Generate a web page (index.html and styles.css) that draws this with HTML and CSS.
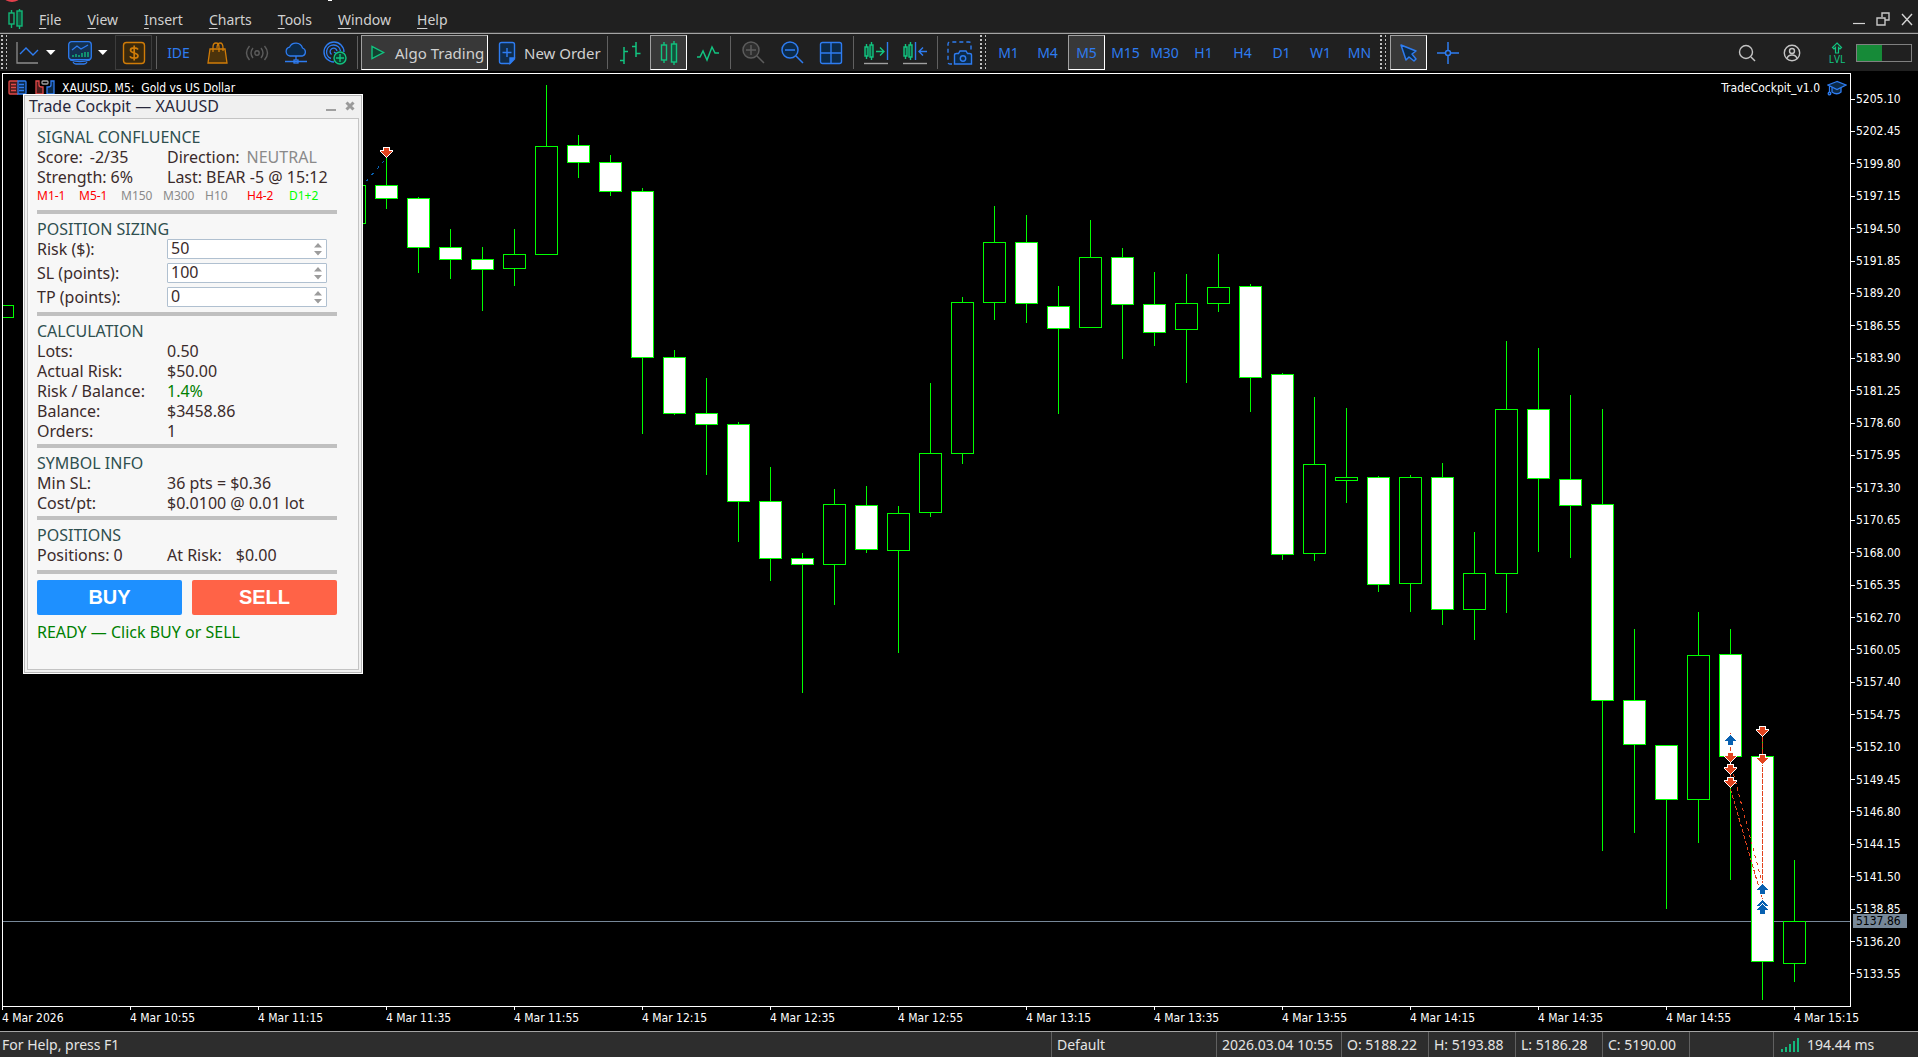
FILE: index.html
```html
<!DOCTYPE html>
<html lang="en">
<head>
    <meta charset="UTF-8">
    <meta name="viewport" content="width=device-width, initial-scale=1.0">
    <title>XAUUSD, M5</title>
    <link rel="stylesheet" href="styles.css">
</head>
<body>
    <header class="menubar">
        <svg class="title-edge" width="340" height="3" viewBox="0 0 340 3"><ellipse cx="12" cy="-3" rx="8" ry="5" fill="#e5404c"/><path d="M328 0h4v1h-4z" fill="#fff"/></svg>
        <svg class="logo" width="16" height="20" viewBox="0 0 16 20" fill="none" stroke="#12b878" stroke-width="1.4"><path d="M3.500 1v3M3.500 15v4M11.500 0v2M11.500 17v3"/><rect x="1" y="4" width="5" height="11"/><rect x="9" y="2" width="5" height="15" fill="#12533b"/></svg>
        <nav class="menu">
            <a href="#"><u>F</u>ile</a>
            <a href="#"><u>V</u>iew</a>
            <a href="#"><u>I</u>nsert</a>
            <a href="#"><u>C</u>harts</a>
            <a href="#"><u>T</u>ools</a>
            <a href="#"><u>W</u>indow</a>
            <a href="#"><u>H</u>elp</a>
        </nav>
        <div class="window-controls">
            <button aria-label="Minimize"><svg width="14" height="14" viewBox="0 0 14 14"><path d="M1 11.500h12" stroke="#d4d4d4" stroke-width="1.200"/></svg></button>
            <button aria-label="Restore"><svg width="14" height="14" viewBox="0 0 14 14" fill="none" stroke="#c8c8c8" stroke-width="1.400"><path d="M6 5V1h7v7H9"/><path d="M1 6h8v7H1z"/></svg></button>
            <button aria-label="Close"><svg width="14" height="14" viewBox="0 0 14 14"><path d="M2 2l10 11M12 2L2 13" stroke="#d4d4d4" stroke-width="1.400"/></svg></button>
        </div>
    </header>

    <div class="toolbar">
        <span class="grip"></span>
        <button class="tool drop" aria-label="Chart">
            <svg width="24" height="24" viewBox="0 0 24 24" fill="none"><path d="M1 1v21h21" stroke="#8c8c8c" stroke-width="1.300"/><path d="M4 13l6-6 7 7 5-5" stroke="#2e7cf0" stroke-width="1.400"/></svg>
            <svg width="10" height="6" viewBox="0 0 10 6"><path d="M0 0h9.500L4.800 5z" fill="#fff"/></svg>
        </button>
        <button class="tool drop" aria-label="Indicators">
            <svg width="24" height="24" viewBox="0 0 24 24" fill="none" stroke="#2e7cf0" stroke-width="1.300"><rect x=".7" y=".7" width="22.600" height="18" rx="3" fill="#14304e"/><path d="M4 9l5-4 4 3 7-4M2 19q10 3 20 0M5 21q1 2 3 2h8q2 0 3-2"/><path d="M5 16v-2M8 16v-3M11 16v-2M14 16v-4M17 16v-5M20 16v-5" stroke="#12c480"/></svg>
            <svg width="10" height="6" viewBox="0 0 10 6"><path d="M0 0h9.500L4.800 5z" fill="#fff"/></svg>
        </button>
        <button class="tool framed" aria-label="Quotes">
            <svg width="24" height="24" viewBox="0 0 24 24" fill="none" stroke="#d07c08" stroke-width="1.400"><rect x="1.500" y="1.500" width="21" height="21" rx="3" fill="#3a290c"/><path d="M16 8.500C15 6.600 8.500 6 8.500 9.300c0 3.400 7.500 1.900 7.500 5.400 0 3.300-7 3.100-8 .5M12.200 4.500v15" stroke-width="1.700"/></svg>
        </button>
        <span class="divider"></span>
        <button class="tool">IDE</button>
        <button class="tool" aria-label="Market">
            <svg width="24" height="24" viewBox="0 0 24 24" fill="#4c330b" stroke="#d07c08" stroke-width="1.300"><path d="M4 8h15l2 14H2z"/><path d="M7 11V6q0-4 3-4 3 0 3 4v5M11 7q0-5 3-5t3 5v3" fill="none"/></svg>
        </button>
        <button class="tool" aria-label="Signals">
            <svg width="24" height="24" viewBox="0 0 24 24" fill="none" stroke="#5c5c5c" stroke-width="1.400"><circle cx="12" cy="12" r="2.200"/><path d="M8 7q-4 5 0 10M16 7q4 5 0 10M4.500 5q-6 7 0 14M19.500 5q6 7 0 14"/></svg>
        </button>
        <button class="tool" aria-label="VPS">
            <svg width="24" height="24" viewBox="0 0 24 24" fill="none" stroke="#2e7cf0" stroke-width="1.300"><path d="M6 15a4.500 4.500 0 0 1-.5-8.800A7 7 0 0 1 18.500 7a4.200 4.200 0 0 1 0 8z" fill="#0c2a48"/><path d="M12 15v4M1 20.500h22"/><rect x="10" y="19" width="4" height="3"/></svg>
        </button>
        <button class="tool" aria-label="Copy trading">
            <svg width="24" height="24" viewBox="0 0 24 24" fill="none" stroke="#2e7cf0" stroke-width="1.400"><path d="M11 21A10 10 0 1 1 21 11M8 17.500A7 7 0 1 1 17.500 10M8.500 13.500A3.500 3.500 0 1 1 14 10M11 11l3 2"/><circle cx="17" cy="17" r="6" fill="#0d4030" stroke="#12c480"/><path d="M13 17h8M17 13v8" stroke="#12c480"/></svg>
        </button>
        <span class="divider"></span>
        <button class="tool wide algo active">
            <svg width="18" height="18" viewBox="0 0 18 18"><path d="M3 2.500v12L14.500 8.500z" fill="#12402f" stroke="#12c480" stroke-width="1.400"/></svg>
            Algo Trading
        </button>
        <button class="tool wide">
            <svg width="18" height="24" viewBox="0 0 18 24" fill="none" stroke="#2e7cf0" stroke-width="1.400"><path d="M3.500 1.500h11q2 0 2 2V18l-4.500 4.500H3.500q-2 0-2-2v-17q0-2 2-2z" fill="#102c4a"/><path d="M16 17h-4v5z" fill="#2e7cf0"/><path d="M9 7v9M4.500 11.500h9"/></svg>
            New Order
        </button>
        <span class="divider"></span>
        <button class="tool" aria-label="Bar chart">
            <svg width="24" height="24" viewBox="0 0 24 24" fill="none" stroke="#12c480" stroke-width="1.500"><path d="M6 6v17M2 19.500h4M6 10.500h4M18 1v15M14 5.500h4M18 12.500h4.500"/></svg>
        </button>
        <button class="tool active" aria-label="Candlesticks">
            <svg width="24" height="24" viewBox="0 0 24 24" fill="none" stroke="#12c480" stroke-width="1.400"><path d="M7 1v3M7 19v3M17 0v3M17 21v3"/><rect x="4.500" y="4" width="5" height="15"/><rect x="14.500" y="3" width="5" height="18" fill="#12533b"/></svg>
        </button>
        <button class="tool" aria-label="Line chart">
            <svg width="24" height="24" viewBox="0 0 24 24" fill="none" stroke="#12c480" stroke-width="1.500"><path d="M1 16h3l3-6 4 9 5-13 3 6h4"/></svg>
        </button>
        <span class="divider"></span>
        <button class="tool" aria-label="Zoom in">
            <svg width="24" height="24" viewBox="0 0 24 24" fill="none" stroke="#5c5c5c" stroke-width="1.500"><circle cx="10" cy="9" r="8" fill="#2e2e2e"/><path d="M5 9h10M10 4v10M16 15l7 7"/></svg>
        </button>
        <button class="tool" aria-label="Zoom out">
            <svg width="24" height="24" viewBox="0 0 24 24" fill="none" stroke="#2e7cf0" stroke-width="1.500"><circle cx="10" cy="9" r="8" fill="#0c2a48"/><path d="M5 9h10M16 15l7 7"/></svg>
        </button>
        <button class="tool" aria-label="Tile windows">
            <svg width="24" height="24" viewBox="0 0 24 24" fill="none" stroke="#2e7cf0" stroke-width="1.400"><rect x="1.500" y="1.500" width="21" height="21" rx="2" fill="#0c2a48"/><path d="M12 1.500v21M1.500 12h21"/></svg>
        </button>
        <span class="divider"></span>
        <button class="tool" aria-label="Auto scroll">
            <svg width="26" height="24" viewBox="0 0 26 24" fill="none" stroke="#12c480" stroke-width="1.400"><path d="M3.500 3v15M8.500 1v18"/><path d="M2 6h3v9H2zM7 4h3v12H7z" fill="#12533b"/><path d="M13 10.500h8M17 6.500l4 4-4 4"/><path d="M24.500 1v18" stroke="#2e7cf0"/><path d="M1 22.500h24" stroke="#a0a0a0"/></svg>
        </button>
        <button class="tool" aria-label="Chart shift">
            <svg width="26" height="24" viewBox="0 0 26 24" fill="none" stroke="#12c480" stroke-width="1.400"><path d="M3.500 3v15M8.500 1v18"/><path d="M2 6h3v9H2zM7 4h3v12H7z" fill="#12533b"/><path d="M13.500 1v18M25 10.500h-8M21 6.500l-4 4 4 4" stroke="#2e7cf0"/><path d="M1 22.500h24" stroke="#a0a0a0"/></svg>
        </button>
        <span class="divider"></span>
        <button class="tool" aria-label="Screenshot">
            <svg width="26" height="24" viewBox="0 0 26 24" fill="none" stroke="#2e7cf0" stroke-width="1.400"><path d="M5 23H3q-2 0-2-2V3q0-2 2-2h19q2 0 2 2v6" stroke-dasharray="4 3"/><path d="M7.500 14q0-1.500 2-1.500h2l1.500-2.500h6l1.500 2.500h2q2 0 2 1.500v9h-17z" fill="#0c2a48"/><circle cx="16" cy="17.500" r="2.700"/></svg>
        </button>
        <span class="grip"></span>
        <button class="tool">M1</button>
        <button class="tool">M4</button>
        <button class="tool active">M5</button>
        <button class="tool">M15</button>
        <button class="tool">M30</button>
        <button class="tool">H1</button>
        <button class="tool">H4</button>
        <button class="tool">D1</button>
        <button class="tool">W1</button>
        <button class="tool">MN</button>
        <span class="grip"></span>
        <button class="tool active" aria-label="Cursor">
            <svg width="24" height="24" viewBox="0 0 24 24"><path d="M4 4l5 15 3-3 5 4 2-2-4-5 4-3z" fill="#0c2a48" stroke="#2e7cf0" stroke-width="1.500" stroke-linejoin="round"/></svg>
        </button>
        <button class="tool" aria-label="Crosshair">
            <svg width="24" height="24" viewBox="0 0 24 24" fill="none" stroke="#2e7cf0" stroke-width="1.500"><circle cx="12" cy="12" r="2.500"/><path d="M12 1v8M12 15v8M1 12h8M15 12h8"/></svg>
        </button>
        <div class="toolbar-right">
            <div class="account">
                <button class="mini" aria-label="Search"><svg width="20" height="20" viewBox="0 0 20 20" fill="none" stroke="#c4c4c4" stroke-width="1.400"><circle cx="9" cy="9" r="6.500"/><path d="M14 14l4 4"/></svg></button>
                <button class="mini" aria-label="Account"><svg width="20" height="20" viewBox="0 0 20 20" fill="none" stroke="#c4c4c4" stroke-width="1.400"><circle cx="10" cy="10" r="7.700"/><circle cx="10" cy="8" r="2.500"/><path d="M5 15.500q1-3.500 5-3.500t5 3.500"/></svg></button>
                <button class="mini level"><svg width="12" height="12" viewBox="0 0 12 12"><path d="M6 1l4.500 4.500L9 7 7.500 5.500V11h-3V5.500L3 7 1.500 5.500z" fill="none" stroke="#12c480" stroke-width="1.200"/></svg>LVL</button>
            </div>
            <span class="battery"></span>
        </div>
    </div>

    <main class="chart">
        <section class="plot">
            <svg class="candles" id="candles" viewBox="3 74 1847 932" preserveAspectRatio="none"></svg>
            <div class="plot-header">
                <svg width="20" height="16" viewBox="0 0 20 16" fill="none" stroke-width="1.300"><path d="M10 1H2q-1 0-1 1v11q0 1 1 1h8" fill="#4a1c1c" stroke="#e04848"/><path d="M10 1h7q1 0 1 1v11q0 1-1 1h-7z" fill="#0c2a48" stroke="#2e7cf0"/><path d="M3 4.500h5M3 7.500h5M3 10.500h5" stroke="#e04848"/><path d="M11 4.500h5M11 7.500h5M11 10.500h5" stroke="#2e7cf0"/></svg>
                <svg width="20" height="16" viewBox="0 0 20 16" fill="none" stroke-width="1.300"><path d="M1 1h3v4q0 2 3 2h1v7H1z" fill="#4a1c1c" stroke="#e04848"/><path d="M19 1h-3v4q0 2-3 2h-1v7h7z" fill="#0c2a48" stroke="#2e7cf0"/><rect x="7" y="1" width="6" height="3" rx="1" stroke="#a0a0a0"/></svg>
                <span>XAUUSD, M5:&nbsp; Gold vs US Dollar</span>
                <span class="expert">TradeCockpit_v1.0</span>
                <svg width="20" height="16" viewBox="0 0 20 16" fill="#0c2a48" stroke="#2e7cf0" stroke-width="1.300"><path d="M5 7v5q5 3.500 9 0V7"/><path d="M10 1.500L1 5l9 4.500L19 5zM2.500 6v6"/><circle cx="2.500" cy="13.500" r="1.300"/></svg>
            </div>
        </section>

        <aside class="price-axis">
            <span>5205.10</span><span>5202.45</span><span>5199.80</span><span>5197.15</span>
            <span>5194.50</span><span>5191.85</span><span>5189.20</span><span>5186.55</span>
            <span>5183.90</span><span>5181.25</span><span>5178.60</span><span>5175.95</span>
            <span>5173.30</span><span>5170.65</span><span>5168.00</span><span>5165.35</span>
            <span>5162.70</span><span>5160.05</span><span>5157.40</span><span>5154.75</span>
            <span>5152.10</span><span>5149.45</span><span>5146.80</span><span>5144.15</span>
            <span>5141.50</span><span>5138.85</span><span>5136.20</span><span>5133.55</span>
            <strong class="current-price">5137.86</strong>
        </aside>

        <div class="time-axis">
            <span>4 Mar 2026</span><span>4 Mar 10:55</span><span>4 Mar 11:15</span>
            <span>4 Mar 11:35</span><span>4 Mar 11:55</span><span>4 Mar 12:15</span>
            <span>4 Mar 12:35</span><span>4 Mar 12:55</span><span>4 Mar 13:15</span>
            <span>4 Mar 13:35</span><span>4 Mar 13:55</span><span>4 Mar 14:15</span>
            <span>4 Mar 14:35</span><span>4 Mar 14:55</span><span>4 Mar 15:15</span>
        </div>

        <form class="cockpit">
            <div class="cockpit-title">
                <span>Trade Cockpit — XAUUSD</span>
                <button type="button" aria-label="Minimize panel"><svg width="12" height="12" viewBox="0 0 12 12"><path d="M1 9h10v2H1z" fill="#a0a0a0"/></svg></button>
                <button type="button" aria-label="Close panel"><svg width="12" height="12" viewBox="0 0 12 12"><path d="M2.500 2.500l7 7M9.500 2.500l-7 7" stroke="#9a9a9a" stroke-width="3"/></svg></button>
            </div>
            <div class="cockpit-body">
                <section>
                    <h2>SIGNAL CONFLUENCE</h2>
                    <div class="row"><span class="pair">Score: <b>-2/35</b></span><span class="pair">Direction: <b class="muted">NEUTRAL</b></span></div>
                    <div class="row"><span class="pair tight">Strength: <b>6%</b></span><span class="pair tight">Last: <b>BEAR -5 @ 15:12</b></span></div>
                    <div class="frames">
                        <span class="down">M1-1</span><span class="down">M5-1</span><span>M150</span><span>M300</span><span>H10</span><span class="down">H4-2</span><span class="up">D1+2</span>
                    </div>
                </section>
                <section>
                    <h2>POSITION SIZING</h2>
                    <div class="fields">
                        <div class="row"><label for="risk">Risk ($):</label><div class="spin"><input id="risk" type="number" value="50"><svg width="8" height="13" viewBox="0 0 8 13"><path d="M0 4.500L4 0l4 4.500zM0 8l4 4.500L8 8z" fill="#9c9c9c"/></svg></div></div>
                        <div class="row"><label for="sl">SL (points):</label><div class="spin"><input id="sl" type="number" value="100"><svg width="8" height="13" viewBox="0 0 8 13"><path d="M0 4.500L4 0l4 4.500zM0 8l4 4.500L8 8z" fill="#9c9c9c"/></svg></div></div>
                        <div class="row"><label for="tp">TP (points):</label><div class="spin"><input id="tp" type="number" value="0"><svg width="8" height="13" viewBox="0 0 8 13"><path d="M0 4.500L4 0l4 4.500zM0 8l4 4.500L8 8z" fill="#9c9c9c"/></svg></div></div>
                    </div>
                </section>
                <section class="compact">
                    <h2>CALCULATION</h2>
                    <div class="row"><span>Lots:</span><span>0.50</span></div>
                    <div class="row"><span>Actual Risk:</span><span>$50.00</span></div>
                    <div class="row"><span>Risk / Balance:</span><span class="good">1.4%</span></div>
                    <div class="row"><span>Balance:</span><span>$3458.86</span></div>
                    <div class="row"><span>Orders:</span><span>1</span></div>
                </section>
                <section class="compact">
                    <h2>SYMBOL INFO</h2>
                    <div class="row"><span>Min SL:</span><span>36 pts = $0.36</span></div>
                    <div class="row"><span>Cost/pt:</span><span>$0.0100 @ 0.01 lot</span></div>
                </section>
                <section>
                    <h2>POSITIONS</h2>
                    <div class="row"><span class="pair tight">Positions: <b>0</b></span><span class="pair loose">At Risk: <b>$0.00</b></span></div>
                </section>
                <div class="orders">
                    <button type="button" class="buy">BUY</button>
                    <button type="button" class="sell">SELL</button>
                </div>
                <p class="good">READY — Click BUY or SELL</p>
            </div>
        </form>
    </main>

    <footer class="statusbar">
        <span class="help">For Help, press F1</span>
        <span class="profile">Default</span>
        <span class="date">2026.03.04 10:55</span>
        <span>O: 5188.22</span>
        <span>H: 5193.88</span>
        <span>L: 5186.28</span>
        <span>C: 5190.00</span>
        <span class="traffic"></span>
        <span class="ping"><svg width="18" height="16" viewBox="0 0 18 16" fill="#14b87c"><path d="M0 12h2v3H0zM4 10h2v5H4zM8 7h2v8H8zM12 4h2v11h-2zM16 1h2v14h-2z"/></svg>194.44 ms</span>
    </footer>
    <script src="chart.js"></script>
</body>
</html>
```

FILE: styles.css
```css
* {
    box-sizing: border-box;
}
body {
    margin: 0;
    height: 100vh;
    display: flex;
    flex-direction: column;
    overflow: hidden;
    background: #000;
    color: #d0d0d0;
    font-family: "Noto Sans", "Open Sans", sans-serif;
    font-size: 14px;
}
button {
    margin: 0;
    padding: 0;
    border: 0;
    background: none;
    color: inherit;
    font: inherit;
}
svg {
    display: block;
    flex: none;
}

/* menu bar */
.menubar {
    position: relative;
    display: flex;
    align-items: center;
    height: 33px;
    padding: 6px 4px 0 8px;
    background: #202020;
    border-bottom: 1px solid #3c3c3c;
}
.title-edge {
    position: absolute;
    top: 0;
    left: 0;
}
.menu {
    display: flex;
    margin-left: 2px;
}
.menu a {
    padding: 0 13px;
    color: #d0d0d0;
    text-decoration: none;
}
.menu u {
    text-underline-offset: 3px;
}
.window-controls {
    display: flex;
    gap: 10px;
    margin-left: auto;
}

/* toolbar */
.toolbar {
    display: flex;
    align-items: center;
    gap: 2px;
    height: 38px;
    padding: 0 6px 0 1px;
    background: #202020;
    border-top: 1px solid #a4a4a4;
}
.grip {
    flex: none;
    width: 8px;
    height: 36px;
    background:
        repeating-linear-gradient(#c0c0c0 0 2px, transparent 2px 4px) 0 0 / 2px 100% no-repeat,
        repeating-linear-gradient(#c0c0c0 0 2px, transparent 2px 4px) 5px 0 / 1px 100% no-repeat;
}
.divider {
    flex: none;
    width: 1px;
    height: 33px;
    margin: 0 1px 0 2px;
    background: #606060;
}
.tool {
    display: flex;
    flex: none;
    align-items: center;
    justify-content: center;
    width: 37px;
    height: 35px;
    border: 1px solid transparent;
    color: #2e7cf0;
    white-space: nowrap;
}
.tool.drop {
    width: 50px;
    gap: 6px;
}
.tool.framed {
    border-color: #3c3c3c;
}
.tool.active {
    background: #383838;
    border-color: #a0a0a0 #fff #fff #a0a0a0;
}
.tool.wide {
    justify-content: flex-start;
    width: 113px;
    gap: 8px;
    padding-left: 7px;
    color: #d0d0d0;
    font-size: 15px;
}
.tool.algo {
    width: 127px;
}
.toolbar-right {
    display: flex;
    align-items: center;
    gap: 7px;
    margin-left: auto;
}
.account {
    display: flex;
    align-items: center;
    gap: 21px;
}
.mini {
    display: flex;
    flex-direction: column;
    align-items: center;
    width: 24px;
}
.level {
    color: #12c480;
    font-size: 10px;
    line-height: 10px;
}
.battery {
    width: 56px;
    height: 18px;
    border: 1px solid #808080;
    background: linear-gradient(90deg, #168a38 46%, transparent 46%);
}

/* chart */
.chart {
    position: relative;
    flex: 1;
    min-height: 0;
    display: grid;
    grid-template: minmax(0, 1fr) 24px / minmax(0, 1fr) 67px;
    padding: 2px 0 0 2px;
    color: #fff;
    font-family: "DejaVu Sans Condensed", "Noto Sans", sans-serif;
    font-size: 12px;
    line-height: 16px;
}
.plot {
    display: grid;
    grid-template: minmax(0, 1fr) / minmax(0, 1fr);
    border: 1px solid #fff;
}
.candles {
    grid-area: 1 / 1;
    width: 100%;
    height: 100%;
}
.plot-header {
    grid-area: 1 / 1;
    align-self: start;
    display: flex;
    align-items: center;
    gap: 7px;
    height: 27px;
    padding: 0 3px 0 5px;
}
.expert {
    margin-left: auto;
}
.price-axis {
    position: relative;
    display: flex;
    flex-direction: column;
    justify-content: space-between;
    padding: 18px 0 25px;
}
.price-axis span {
    display: flex;
    align-items: center;
    gap: 1px;
}
.price-axis span::before {
    content: "";
    width: 4px;
    height: 1px;
    background: #fff;
}
.current-price {
    position: absolute;
    top: 90%;
    left: 2px;
    width: 54px;
    padding-left: 3px;
    background: #778899;
    color: #000;
    font-weight: normal;
    line-height: 14px;
}
.time-axis {
    grid-column: 1 / -1;
    display: grid;
    grid-template-columns: repeat(14, minmax(0, 128fr)) minmax(0, 124fr);
    white-space: nowrap;
}
.time-axis span::before {
    content: "";
    display: block;
    width: 1px;
    height: 3px;
    background: #fff;
}

/* trade panel */
.cockpit {
    position: absolute;
    top: 23px;
    left: 23px;
    width: 340px;
    padding: 0 3px 3px;
    border: 1px solid #fff;
    outline: 1px solid #b8b8b8;
    outline-offset: -2px;
    background: #f0f0f0;
    color: #3b2b2b;
    font-family: "Noto Sans", sans-serif;
    font-size: 16px;
    line-height: 20px;
}
.cockpit-title {
    display: flex;
    align-items: center;
    gap: 7px;
    height: 23px;
    padding: 0 3px 1px 2px;
    color: #28283c;
}
.cockpit-title span {
    flex: 1;
}
.cockpit-body {
    padding: 8px 21px 27px 9px;
    border: 1px solid #c4c4c4;
    background: #f7f7f7;
}
.cockpit section {
    margin-bottom: 5px;
    padding-bottom: 5px;
    border-bottom: 4px solid #c0c0c0;
}
.cockpit section.compact {
    padding-bottom: 3px;
}
.cockpit h2 {
    margin: 0;
    color: #2f4f4f;
    font-size: 16px;
    font-weight: normal;
}
.row {
    display: grid;
    grid-template-columns: 130px 1fr;
    white-space: nowrap;
}
.row b {
    font-weight: normal;
}
.pair {
    display: flex;
    gap: 7px;
}
.pair.tight {
    gap: 4px;
}
.pair.loose {
    gap: 14px;
}
.frames {
    display: grid;
    grid-template-columns: repeat(7, 42px);
    color: #8a8a8a;
    font-size: 12px;
    line-height: 18px;
}
.row .muted {
    color: #8a8a8a;
}
.frames .down {
    color: #f00;
}
.frames .up {
    color: #0f0;
}
.good {
    color: #008000;
}
.fields {
    display: grid;
    gap: 4px;
}
.spin {
    position: relative;
    width: 160px;
}
.spin input {
    display: block;
    width: 100%;
    height: 20px;
    padding: 0 20px 2px 3px;
    border: 1px solid #b0c0d0;
    border-radius: 1px;
    background: #fff;
    color: inherit;
    font: inherit;
    line-height: 16px;
    appearance: textfield;
}
.spin input::-webkit-inner-spin-button {
    appearance: none;
    margin: 0;
}
.spin svg {
    position: absolute;
    top: 4px;
    right: 5px;
}
.orders {
    display: grid;
    grid-template-columns: 1fr 1fr;
    gap: 10px;
    padding-top: 1px;
}
.orders button {
    height: 35px;
    border-radius: 2px;
    color: #fff;
    font: bold 20px "Liberation Sans", Arial, sans-serif;
}
.buy {
    background: #1e90ff;
}
.sell {
    background: #ff6347;
}
.cockpit p {
    margin: 7px 0 0;
}

/* status bar */
.statusbar {
    display: flex;
    height: 26px;
    border-top: 1px solid #a4a4a4;
    background: #2d2d2d;
    color: #e4e4e4;
    line-height: 26px;
    white-space: nowrap;
}
.statusbar span {
    width: 87px;
    padding-left: 5px;
    border-left: 1px solid #606060;
}
.statusbar .help {
    flex: 1;
    padding-left: 2px;
    border: 0;
}
.statusbar .profile {
    width: 165px;
}
.statusbar .date {
    width: 125px;
}
.statusbar .traffic {
    width: 84px;
}
.statusbar .ping {
    display: flex;
    align-items: center;
    gap: 8px;
    width: 145px;
    padding-left: 7px;
}
```

FILE: chart.js
```js
// x, open/close top, open/close bottom, high, low, bearish
const candles = [
    [2, 305, 317, 305, 317, 0],
    [354, 185, 223, 185, 223, 0],
    [386, 185, 198, 157, 209, 1],
    [418, 198, 247, 197, 273, 1],
    [450, 247, 259, 229, 279, 1],
    [482, 259, 269, 247, 311, 1],
    [514, 254, 268, 229, 286, 0],
    [546, 146, 254, 85, 255, 0],
    [578, 145, 162, 135, 178, 1],
    [610, 162, 191, 155, 196, 1],
    [642, 191, 357, 188, 434, 1],
    [674, 357, 413, 350, 415, 1],
    [706, 413, 424, 378, 475, 1],
    [738, 424, 501, 422, 542, 1],
    [770, 501, 558, 467, 581, 1],
    [802, 558, 564, 553, 693, 1],
    [834, 504, 564, 489, 605, 0],
    [866, 505, 549, 486, 553, 1],
    [898, 513, 550, 506, 653, 0],
    [930, 453, 512, 383, 517, 0],
    [962, 302, 453, 297, 464, 0],
    [994, 242, 302, 206, 320, 0],
    [1026, 242, 303, 215, 323, 1],
    [1058, 306, 328, 286, 414, 1],
    [1090, 257, 327, 220, 328, 0],
    [1122, 257, 304, 248, 359, 1],
    [1154, 304, 332, 272, 346, 1],
    [1186, 303, 329, 274, 383, 0],
    [1218, 287, 303, 254, 312, 0],
    [1250, 286, 377, 284, 412, 1],
    [1282, 374, 554, 373, 560, 1],
    [1314, 464, 553, 397, 561, 0],
    [1346, 477, 480, 408, 503, 0],
    [1378, 477, 584, 476, 592, 1],
    [1410, 477, 583, 475, 612, 0],
    [1442, 477, 609, 463, 625, 1],
    [1474, 573, 609, 532, 640, 0],
    [1506, 409, 573, 341, 613, 0],
    [1538, 409, 478, 348, 552, 1],
    [1570, 479, 505, 395, 558, 1],
    [1602, 504, 700, 409, 851, 1],
    [1634, 700, 744, 629, 833, 1],
    [1666, 745, 799, 745, 909, 1],
    [1698, 655, 799, 612, 843, 0],
    [1730, 654, 756, 629, 880, 1],
    [1762, 756, 961, 733, 1000, 1],
    [1794, 921, 963, 860, 982, 0]
];

// dashed links between entries and exits
const links = [
    ['M366.500 181L386.500 158', '#0860b0', '3 5'],
    ['M1730.500 733V787', '#e2431e', '4 3'],
    ['M1730.500 789L1762.500 900', '#e2431e', '4 2'],
    ['M1733.500 774L1762.500 884', '#e2431e', '3 4'],
    ['M1762.500 737V884', '#e2431e', '5 1']
];

const sells = [[386, 147], [1730, 752], [1730, 764], [1730, 777], [1762, 726], [1762, 754]];
const buys = [[1730, 735], [1762, 884], [1762, 900], [1762, 904]];

let out = '<path d="M3 921.500H1850" stroke="#778899"/>';

candles.forEach(([x, top, bottom, high, low, bearish]) => {
    out += `<path d="M${x + 0.5} ${high}V${low}" stroke="#0f0"/>`;
    out += `<rect x="${x - 10.5}" y="${top + 0.5}" width="22" height="${bottom - top}" fill="${bearish ? '#fff' : '#000'}" stroke="#0f0"/>`;
});

links.forEach(([d, color, dash]) => {
    out += `<path d="${d}" stroke="${color}" stroke-dasharray="${dash}" fill="none"/>`;
});

// white arrow first, coloured one inside it
buys.forEach(([x, y]) => {
    out += `<g transform="translate(${x + 0.5} ${y})"><path d="M0-1l6.500 6.500V7h-3v4h-7V7h-3V5.500z" fill="#fff"/><path d="M0 0l5.500 6h-3v4h-5V6h-3z" fill="#0860b0"/></g>`;
});

sells.forEach(([x, y]) => {
    out += `<g transform="translate(${x + 0.5} ${y})"><path d="M-3.500 0h7v3h3v1.500L0 11.500-6.500 4.500V3h3z" fill="#fff"/><path d="M-2.500 1h5v3h3L0 10-5.500 4h3z" fill="#e2431e"/></g>`;
});

document.getElementById('candles').innerHTML = `<g shape-rendering="crispEdges">${out}</g>`;
```
